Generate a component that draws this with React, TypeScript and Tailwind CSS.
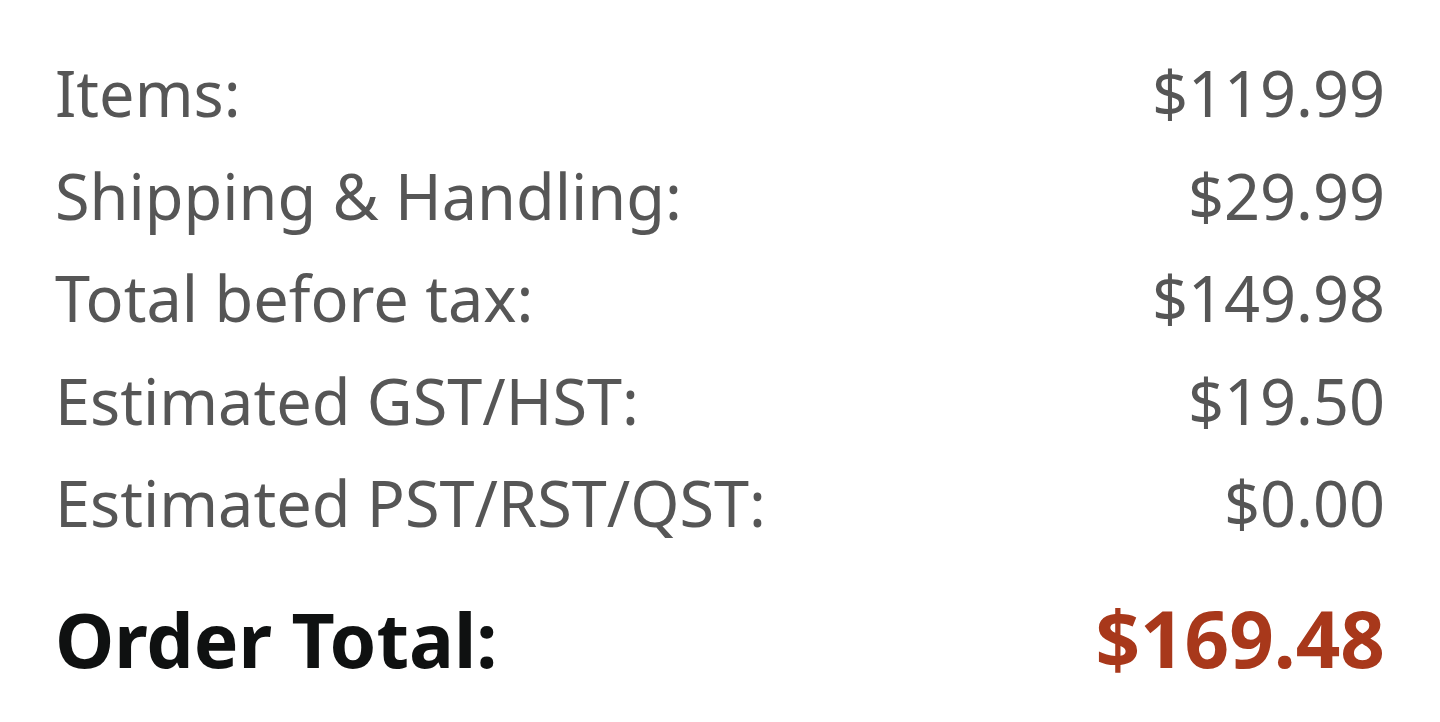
import React from "react";

const rows = [
  { label: "Items:", value: "$119.99" },
  { label: "Shipping & Handling:", value: "$29.99" },
  { label: "Total before tax:", value: "$149.98" },
  { label: "Estimated GST/HST:", value: "$19.50" },
  { label: "Estimated PST/RST/QST:", value: "$0.00" },
];

export default function App() {
  return (
    <div
      className="w-[1440px] h-[722px] bg-white px-[55px] pt-[42px]"
      style={{ fontFamily: '"Noto Sans", "Open Sans", Arial, sans-serif' }}
    >
      <div className="flex flex-col">
        {rows.map((row) => (
          <div
            key={row.label}
            className="flex justify-between items-baseline text-[63px] leading-[102.5px] text-[#565656]"
          >
            <span>{row.label}</span>
            <span>{row.value}</span>
          </div>
        ))}
      </div>
      <div className="flex justify-between items-baseline mt-[28px] text-[75px] leading-[110px] font-bold">
        <span className="text-[#0F1111]">Order Total:</span>
        <span className="text-[#A8381B] text-[78px]">$169.48</span>
      </div>
    </div>
  );
}
